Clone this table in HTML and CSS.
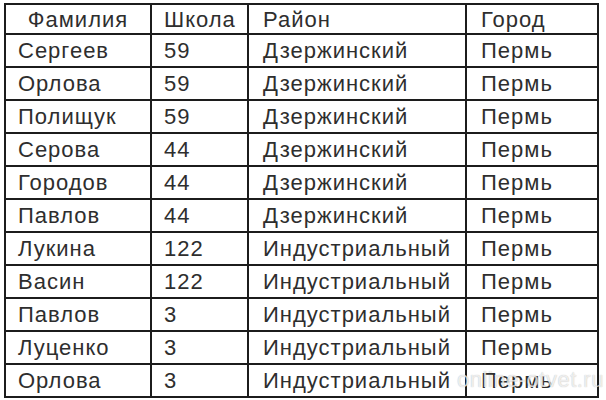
FILE: index.html
```html
<!DOCTYPE html>
<html lang="ru">
<head>
<meta charset="utf-8">
<link rel="stylesheet" href="styles.css">
</head>
<body>
<div class="page">
  <div class="grid">
    <div class="cell head center">Фамилия</div><div class="cell head">Школа</div><div class="cell head c3">Район</div><div class="cell head c4">Город</div>
    <div class="cell">Сергеев</div><div class="cell">59</div><div class="cell c3">Дзержинский</div><div class="cell c4">Пермь</div>
    <div class="cell">Орлова</div><div class="cell">59</div><div class="cell c3">Дзержинский</div><div class="cell c4">Пермь</div>
    <div class="cell">Полищук</div><div class="cell">59</div><div class="cell c3">Дзержинский</div><div class="cell c4">Пермь</div>
    <div class="cell">Серова</div><div class="cell">44</div><div class="cell c3">Дзержинский</div><div class="cell c4">Пермь</div>
    <div class="cell">Городов</div><div class="cell">44</div><div class="cell c3">Дзержинский</div><div class="cell c4">Пермь</div>
    <div class="cell">Павлов</div><div class="cell">44</div><div class="cell c3">Дзержинский</div><div class="cell c4">Пермь</div>
    <div class="cell">Лукина</div><div class="cell">122</div><div class="cell c3">Индустриальный</div><div class="cell c4">Пермь</div>
    <div class="cell">Васин</div><div class="cell">122</div><div class="cell c3">Индустриальный</div><div class="cell c4">Пермь</div>
    <div class="cell">Павлов</div><div class="cell">3</div><div class="cell c3">Индустриальный</div><div class="cell c4">Пермь</div>
    <div class="cell">Луценко</div><div class="cell">3</div><div class="cell c3">Индустриальный</div><div class="cell c4">Пермь</div>
    <div class="cell">Орлова</div><div class="cell">3</div><div class="cell c3">Индустриальный</div><div class="cell c4">Пермь</div>
  </div>
  <div class="watermark">online-otvet.ru</div>
</div>
</body>
</html>
```
FILE: styles.css
```css
html, body {
  margin: 0;
  padding: 0;
  background: #fff;
}
.page {
  position: relative;
  width: 606px;
  height: 400px;
  padding: 3px 0 0 4px;
  box-sizing: border-box;
}
.grid {
  display: grid;
  grid-template-columns: 144px 95px 216px 130px;
  grid-template-rows: 28px repeat(11, 31px);
  gap: 2px;
  padding: 2px;
  width: max-content;
  background: #1c1c1c;
}
.cell {
  background: #fff;
  font-family: "Liberation Sans", Arial, sans-serif;
  font-size: 22px;
  letter-spacing: 1px;
  color: #2e2e2e;
  display: flex;
  align-items: center;
  padding-left: 12px;
  padding-top: 1px;
  white-space: nowrap;
  overflow: hidden;
}
.head {
  padding-top: 2px;
}
.center {
  justify-content: center;
  padding-left: 0;
}
.c3 {
  padding-left: 14px;
}
.c4 {
  padding-left: 14px;
}
.watermark {
  position: absolute;
  left: 457px;
  top: 367px;
  font-family: "Liberation Sans", Arial, sans-serif;
  font-size: 22px;
  color: rgba(255, 255, 255, 0.75);
  text-shadow: 0 0 1px rgba(0, 0, 0, 0.3);
  letter-spacing: 0.5px;
}
```
